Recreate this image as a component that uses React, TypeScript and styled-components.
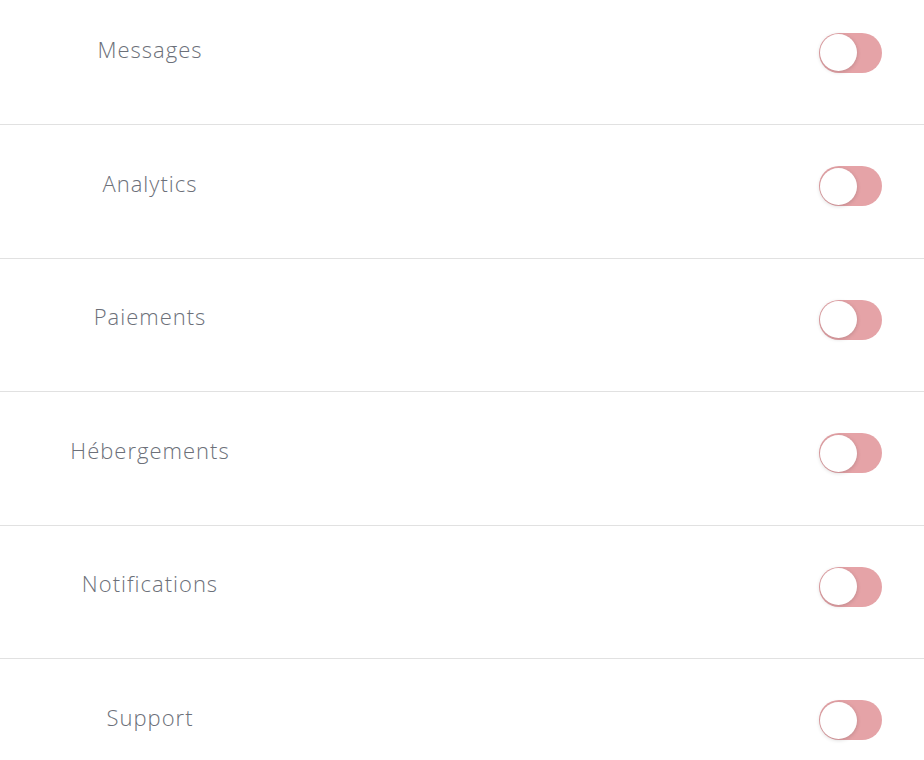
import React, {useState} from 'react';
import styled, {createGlobalStyle} from 'styled-components';

const GlobalStyle = createGlobalStyle`
    html, body {
        margin: 0;
        padding: 0;
        background: #ffffff;
        overflow: hidden;
    }
    body {
        font-family: "Open Sans", Lato, sans-serif;
    }
`

const List = styled.div`
    margin-top: -8.5px;
`

const Row = styled.div`
    box-sizing: border-box;
    height: 133.5px;
    display: flex;
    align-items: center;
    padding: 41px 42px 51px 0;
    border-bottom: 1px solid #e1e1e1;
`

const Label = styled.span`
    width: 300px;
    text-align: center;
    margin-bottom: 7px;
    font-family: "Open Sans", Lato, sans-serif;
    font-weight: 300;
    font-size: 22px;
    line-height: 26px;
    letter-spacing: 1px;
    color: #6c7079;
`

const Track = styled.button<{ $on: boolean }>`
    position: relative;
    margin-left: auto;
    width: 63px;
    height: 40px;
    padding: 0;
    border: none;
    border-radius: 20px;
    cursor: pointer;
    background: ${p => p.$on ? '#d9747c' : '#e5a3a7'};
`

const Knob = styled.span<{ $on: boolean }>`
    position: absolute;
    top: 1.5px;
    left: ${p => p.$on ? '25px' : '1px'};
    width: 37px;
    height: 37px;
    border-radius: 50%;
    background: #ffffff;
    box-shadow: 0 1px 4px rgba(0, 0, 0, 0.18);
    transition: left 0.2s;
`

const items = ['Messages', 'Analytics', 'Paiements', 'Hébergements', 'Notifications', 'Support']

function Toggle() {
    const [on, setOn] = useState(false)
    return (
        <Track $on={on} onClick={() => setOn(!on)} aria-pressed={on}>
            <Knob $on={on}/>
        </Track>
    )
}

function App() {
    return (
        <>
            <GlobalStyle/>
            <List>
                {items.map(item => (
                    <Row key={item}>
                        <Label>{item}</Label>
                        <Toggle/>
                    </Row>
                ))}
            </List>
        </>
    );
}

export default App;
